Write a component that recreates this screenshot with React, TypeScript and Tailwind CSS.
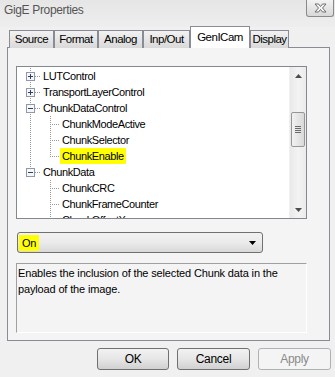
import React from "react";

type TreeRow = {
  label: string;
  level: 1 | 2;
  box?: "plus" | "minus";
  lastChild?: boolean;
  selected?: boolean;
};

const rows: TreeRow[] = [
  { label: "LUTControl", level: 1, box: "plus" },
  { label: "TransportLayerControl", level: 1, box: "plus" },
  { label: "ChunkDataControl", level: 1, box: "minus" },
  { label: "ChunkModeActive", level: 2 },
  { label: "ChunkSelector", level: 2 },
  { label: "ChunkEnable", level: 2, lastChild: true, selected: true },
  { label: "ChunkData", level: 1, box: "minus", lastChild: true },
  { label: "ChunkCRC", level: 2 },
  { label: "ChunkFrameCounter", level: 2 },
  { label: "ChunkOffsetX", level: 2 },
];

const tabs = [
  { name: "Source", w: "w-[45px]" },
  { name: "Format", w: "w-[44px]" },
  { name: "Analog", w: "w-[45px]" },
  { name: "Inp/Out", w: "w-[47px]" },
  { name: "GenICam", w: "w-[60px]", active: true },
  { name: "Display", w: "w-[39px]" },
];

const DOT = "#9a9a9a";

// connector lines for one tree row
const TreeLines = ({ row, underChunkData }: { row: TreeRow; underChunkData: boolean }) => {
  const width = row.level === 1 ? 23 : 42;
  return (
    <svg width={width} height={16} className="shrink-0" shapeRendering="crispEdges">
      {row.level === 1 && (
        <line x1={13.5} y1={0} x2={13.5} y2={row.lastChild ? 9 : 16} stroke={DOT} strokeDasharray="1 1" />
      )}
      {row.level === 2 && !underChunkData && (
        <line x1={13.5} y1={0} x2={13.5} y2={16} stroke={DOT} strokeDasharray="1 1" />
      )}
      {row.level === 1 && (
        <line x1={18} y1={8.5} x2={23} y2={8.5} stroke={DOT} strokeDasharray="1 1" />
      )}
      {row.level === 2 && (
        <>
          <line x1={33.5} y1={0} x2={33.5} y2={row.lastChild ? 9 : 16} stroke={DOT} strokeDasharray="1 1" />
          <line x1={35} y1={8.5} x2={42} y2={8.5} stroke={DOT} strokeDasharray="1 1" />
        </>
      )}
      {row.box && (
        <>
          <rect x={9.5} y={4.5} width={8} height={8} fill="#f7f7f7" stroke="#8e9aa8" />
          <line x1={11} y1={8.5} x2={16} y2={8.5} stroke="#27406e" />
          {row.box === "plus" && <line x1={13.5} y1={6} x2={13.5} y2={11} stroke="#27406e" />}
        </>
      )}
    </svg>
  );
};

const Scrollbar = () => (
  <div className="w-[17px] h-full shrink-0 flex flex-col bg-gradient-to-r from-[#e9e9e9] via-[#f3f3f3] to-[#ebebeb] border-l border-[#f0f0f0]">
    <div className="h-[17px] flex items-center justify-center">
      <svg width="7" height="4" viewBox="0 0 7 4">
        <path d="M3.5 0 L7 4 L0 4 Z" fill="#4d4d4d" />
      </svg>
    </div>
    <div className="h-[28px]" />
    <div className="h-[35px] mx-[1px] rounded-[2px] border border-[#969696] bg-gradient-to-r from-[#f2f2f2] to-[#d9d9d9] flex flex-col items-center justify-center gap-[1px]">
      <div className="w-[6px] h-px bg-[#6a6a6a]" />
      <div className="w-[6px] h-px bg-[#6a6a6a]" />
      <div className="w-[6px] h-px bg-[#6a6a6a]" />
      <div className="w-[6px] h-px bg-[#6a6a6a]" />
    </div>
    <div className="flex-1" />
    <div className="h-[17px] flex items-center justify-center">
      <svg width="7" height="4" viewBox="0 0 7 4">
        <path d="M0 0 L7 0 L3.5 4 Z" fill="#4d4d4d" />
      </svg>
    </div>
  </div>
);

const Button = ({ label, w, disabled }: { label: string; w: string; disabled?: boolean }) => (
  <div
    className={`${w} h-[22px] rounded-[3px] border flex items-center justify-center text-[12px] tracking-[-0.3px] ${
      disabled
        ? "border-[#adb2b5] bg-[#f4f4f4] text-[#8a8a8a]"
        : "border-[#707070] bg-gradient-to-b from-[#f2f2f2] via-[#e6e6e6] to-[#d0d0d0] text-black"
    }`}
  >
    {label}
  </div>
);

export default function App() {
  return (
    <div className="w-[335px] h-[377px] bg-[#f0f0f0] flex flex-col font-['Liberation_Sans',Arial,sans-serif] text-[11px] tracking-[-0.4px] text-black overflow-hidden">
      {/* Title bar */}
      <div className="h-[27px] flex items-start justify-between shrink-0 bg-gradient-to-b from-[#e6e6e6] to-[#eeeeee]">
        <span className="mt-[1px] ml-[4px] text-[12px] tracking-[-0.35px] text-[#555555]">
          GigE Properties
        </span>
        <div className="mr-[1px] w-[28px] h-[17px] rounded-b-[3px] border border-t-0 border-[#8a8a8a] bg-gradient-to-b from-[#f3f3f3] to-[#d8d8d8] flex items-center justify-center">
          <svg width="13" height="10" viewBox="0 0 13 10">
            <path
              d="M1 1 L4.5 1 L6.5 3.5 L8.5 1 L12 1 L8.5 5 L12 9 L8.5 9 L6.5 6.5 L4.5 9 L1 9 L4.5 5 Z"
              fill="#f6f6f6"
              stroke="#6e6e6e"
              strokeWidth="1"
              strokeLinejoin="round"
            />
          </svg>
        </div>
      </div>

      {/* Tabs */}
      <div className="h-[21px] pl-[9px] flex items-end shrink-0 relative z-10 -mb-px">
        {tabs.map((t) =>
          t.active ? (
            <div
              key={t.name}
              className={`${t.w} h-[22px] border border-b-0 border-[#898c95] bg-white flex items-start justify-center pt-[2px] text-[11.5px] tracking-[-0.5px]`}
            >
              {t.name}
            </div>
          ) : (
            <div
              key={t.name}
              className={`${t.w} h-[18px] border border-b-0 border-[#898c95] bg-gradient-to-b from-[#f2f2f2] to-[#d9d9d9] flex items-center justify-center text-[11.5px] tracking-[-0.5px]`}
            >
              {t.name}
            </div>
          )
        )}
      </div>

      {/* Tab panel */}
      <div className="ml-[7px] w-[323px] h-[294px] border border-[#898c95] bg-[#f4f4f4] pl-[8px] pt-[18px] flex flex-col shrink-0">
        {/* Feature tree */}
        <div className="w-[291px] h-[153px] border border-[#828790] bg-white flex overflow-hidden shrink-0">
          <div className="flex-1 pt-px overflow-hidden">
            {rows.map((r, i) => (
              <div key={r.label} className="h-[16px] flex items-center">
                <TreeLines row={r} underChunkData={i >= 7} />
                <span
                  className={`ml-px px-[2px] h-[16px] leading-[16px] whitespace-nowrap ${
                    r.selected ? "bg-[#ffff00]" : ""
                  }`}
                >
                  {r.label}
                </span>
              </div>
            ))}
          </div>
          <Scrollbar />
        </div>

        {/* Value selector */}
        <div className="mt-[13px] ml-px w-[246px] h-[21px] rounded-[3px] border border-[#707070] bg-gradient-to-b from-[#f2f2f2] via-[#ebebeb] to-[#d9d9d9] flex items-center justify-between shrink-0">
          <span className="ml-px h-[16px] leading-[16px] px-[3px] bg-[#ffff00]">On</span>
          <svg width="7" height="4" viewBox="0 0 7 4" className="mr-[6px]">
            <path d="M0 0 L7 0 L3.5 4 Z" fill="#000" />
          </svg>
        </div>

        {/* Description */}
        <div className="mt-[10px] w-[291px] h-[70px] border border-t-[#a0a0a0] border-l-[#a0a0a0] border-b-white border-r-white pl-px pr-[6px] pt-[1px] leading-[16px] tracking-[-0.15px] shrink-0">
          Enables the inclusion of the selected Chunk data in the payload of the image.
        </div>
      </div>

      {/* Dialog buttons */}
      <div className="mt-[7px] pr-[4px] flex justify-end gap-[8px]">
        <Button label="OK" w="w-[72px]" />
        <Button label="Cancel" w="w-[73px]" />
        <Button label="Apply" w="w-[73px]" disabled />
      </div>
    </div>
  );
}
